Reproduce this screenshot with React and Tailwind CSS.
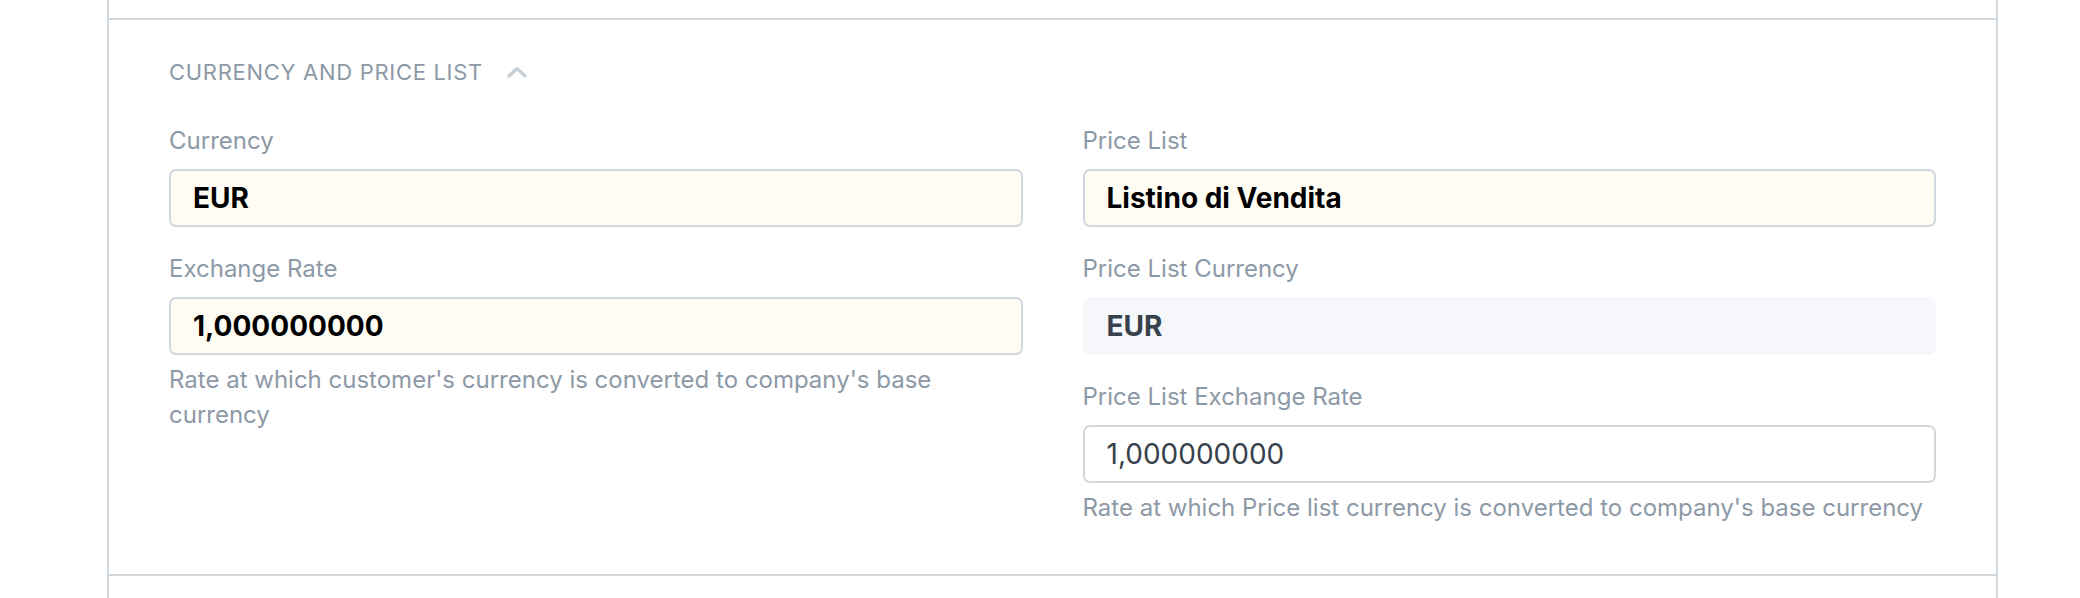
import React from "react";

const FONT = { fontFamily: "Inter, 'Noto Sans', sans-serif" };

const ChevronUp = () => (
  <svg width="20" height="12" viewBox="0 0 20 12" fill="none" className="ml-[24px]">
    <path d="M2 10 L10 2.5 L18 10" stroke="#c9d0d6" strokeWidth="3.5" strokeLinecap="round" strokeLinejoin="round" />
  </svg>
);

const Field = ({ label, value, variant = "bold", help, helpWidth, last }) => {
  // variant: bold (mandatory, cream bg), plain (white input), readonly (grey box)
  const box =
    variant === "readonly"
      ? "bg-[#f5f7fa] text-[#36414c] font-bold border-2 border-transparent"
      : variant === "plain"
      ? "bg-white text-[#36414c] border-2 border-[#d1d8dd]"
      : "bg-[#fffcf4] text-black font-bold border-2 border-[#d1d8dd]";

  return (
    <div className={last ? "" : "mb-[26px]"}>
      <div className="text-[24px] leading-[32px] text-[#8d99a6] mb-[12px]">{label}</div>
      <div className={`h-[58px] rounded-[7px] flex items-center pl-[22px] text-[28px] ${box}`}>{value}</div>
      {help && (
        <div className={`mt-[7px] text-[24px] leading-[35px] text-[#8d99a6] ${helpWidth || ""}`}>{help}</div>
      )}
    </div>
  );
};

export default function App() {
  return (
    <div className="w-[2080px] h-[598px] bg-white overflow-hidden" style={FONT}>
      <div className="ml-[107px] w-[1891px] h-full border-x-2 border-[#d1d8dd] flex flex-col">
        <div className="h-[18px]" />
        <div className="border-t-2 border-b-2 border-[#d1d8dd] h-[558px] pt-[36px] px-[60px]">
          <div className="flex items-center h-[32px] text-[22px] tracking-[0.7px] text-[#8d99a6] uppercase">
            Currency and Price List
            <ChevronUp />
          </div>
          <div className="mt-[37px] grid grid-cols-2 gap-x-[60px]">
            <div>
              <Field label="Currency" value="EUR" />
              <Field
                label="Exchange Rate"
                value="1,000000000"
                last
                helpWidth="max-w-[800px]"
                help="Rate at which customer's currency is converted to company's base currency"
              />
            </div>
            <div>
              <Field label="Price List" value="Listino di Vendita" />
              <Field label="Price List Currency" value="EUR" variant="readonly" />
              <Field
                label="Price List Exchange Rate"
                value="1,000000000"
                variant="plain"
                last
                help="Rate at which Price list currency is converted to company's base currency"
              />
            </div>
          </div>
        </div>
      </div>
    </div>
  );
}
